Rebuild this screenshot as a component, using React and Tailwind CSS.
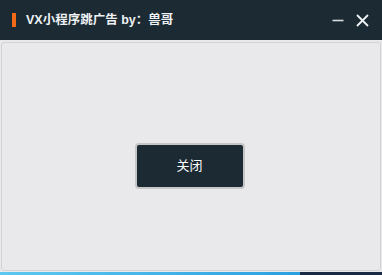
import React from "react";

const App = () => {
  return (
    <div className="w-[382px] h-[275px] flex flex-col bg-[#1c2a33] font-['Liberation_Sans','Noto_Sans_CJK_SC',sans-serif] overflow-hidden">
      {/* Title bar */}
      <div className="h-[40px] flex items-center bg-[#1c2a33] shrink-0">
        <div className="ml-[12px] w-[4px] h-[14px] bg-[#f26a16]" />
        <span className="ml-[10px] text-[12.5px] font-bold text-[#eef2f5] leading-none">
          VX小程序跳广告 by：兽哥
        </span>
        <div className="ml-auto flex items-center gap-[12px] mr-[13px]">
          <svg width="12" height="12" viewBox="0 0 12 12">
            <path d="M0.5 6.5 H11.5" stroke="#d8dde0" strokeWidth="1.6" />
          </svg>
          <svg width="13" height="13" viewBox="0 0 13 13">
            <path d="M1 1 L12 12 M12 1 L1 12" stroke="#eef2f5" strokeWidth="1.8" />
          </svg>
        </div>
      </div>

      {/* Body */}
      <div className="h-[232px] bg-[#e9e9eb] pt-[2px] px-[1px] pb-[1px] shrink-0">
        <div className="h-full border border-[#d2d2d4] rounded-[3px] flex items-center justify-center">
          <button className="w-[110px] h-[46px] mt-[18px] mr-[3px] bg-[#1c2a33] border-2 border-[#c4c6c8] rounded-[4px] text-[13px] text-white">
            关闭
          </button>
        </div>
      </div>

      {/* Desktop strip */}
      <div className="flex-1 flex">
        <div className="w-[300px] bg-gradient-to-r from-[#5cc8f0] to-[#2a9fe0]" />
        <div className="flex-1 bg-[#1a2a44]" />
      </div>
    </div>
  );
};

export default App;
